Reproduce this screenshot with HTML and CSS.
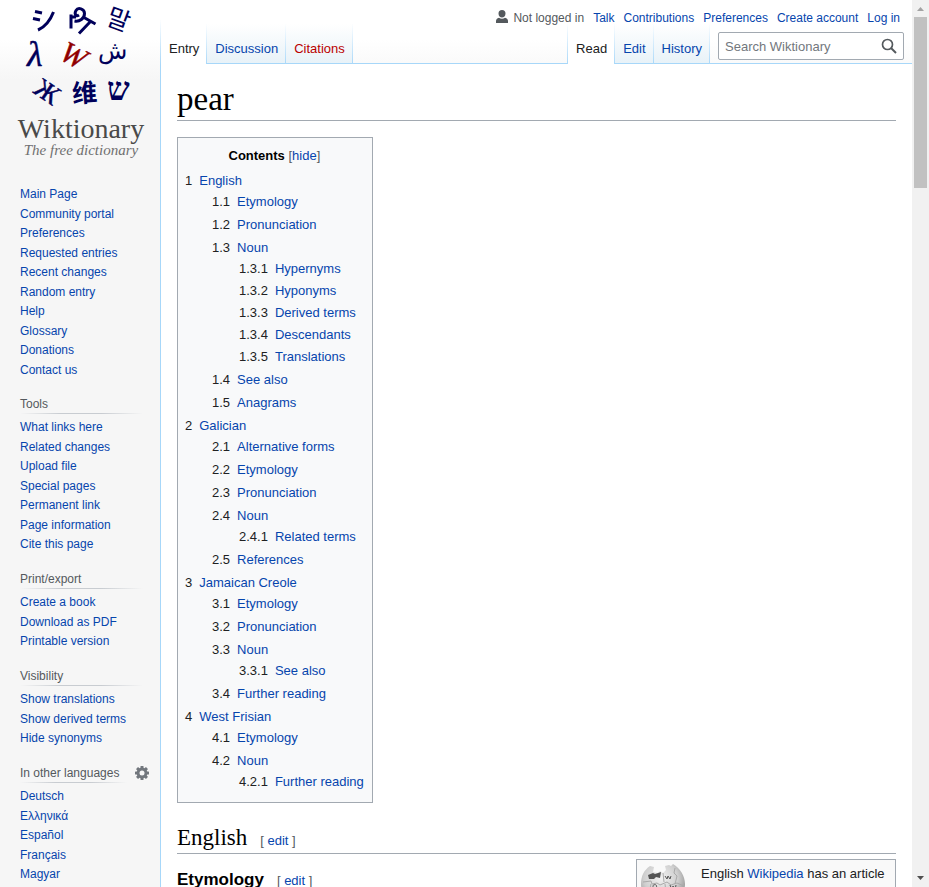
FILE: index.html
```html
<!DOCTYPE html>
<html lang="en">
<head>
<meta charset="utf-8">
<title>pear - Wiktionary</title>
<link rel="stylesheet" href="styles.css">
</head>
<body>
<div class="window">
  <aside class="sidebar">
    <a class="logo" href="#" aria-label="Wiktionary, the free dictionary">
      <svg width="160" height="160" viewBox="0 0 160 160" aria-hidden="true">
        <g class="glyphs">
          <g fill="none" stroke="#00005a">
            <path stroke-width="3" d="M35 11.500l7 1.500M33 18.500l7 1.500M38 30c7-3 12-9 15.500-18"/>
            <path stroke-width="3" d="M71 28.500V14.500M71 17h5M79 15c-3 2-5-1-3-4.500c2-3.500 8.500-2 8.500 3c0 5-5 8.500-10 7.500M79 33.500L90 22M84 17.500l11.500 6.500"/>
          </g>
          <text class="cjk" x="107" y="29" font-size="25" transform="rotate(20 120 20)">말</text>
          <text class="serif light italic" x="27" y="66" font-size="36">λ</text>
          <text class="serif light italic red" x="61" y="66" font-size="30" transform="rotate(28 75 56)">W</text>
          <text class="arabic" x="98" y="59" font-size="24">ش</text>
          <text class="serif light" x="35" y="101" font-size="27" transform="rotate(34 48 92)">Ж</text>
          <text class="cjk bold" x="72" y="102" font-size="25" transform="rotate(-4 84 92)">维</text>
          <text class="serif" x="107" y="100" font-size="32">ש</text>
        </g>
        <text class="wordmark" x="81" y="138" text-anchor="middle">Wiktionary</text>
        <text class="tagline" x="81" y="155" text-anchor="middle">The free dictionary</text>
      </svg>
    </a>
    <nav class="portal first" aria-label="Navigation">
      <ul>
        <li><a href="#">Main Page</a></li>
        <li><a href="#">Community portal</a></li>
        <li><a href="#">Preferences</a></li>
        <li><a href="#">Requested entries</a></li>
        <li><a href="#">Recent changes</a></li>
        <li><a href="#">Random entry</a></li>
        <li><a href="#">Help</a></li>
        <li><a href="#">Glossary</a></li>
        <li><a href="#">Donations</a></li>
        <li><a href="#">Contact us</a></li>
      </ul>
    </nav>
    <nav class="portal">
      <h3>Tools</h3>
      <ul>
        <li><a href="#">What links here</a></li>
        <li><a href="#">Related changes</a></li>
        <li><a href="#">Upload file</a></li>
        <li><a href="#">Special pages</a></li>
        <li><a href="#">Permanent link</a></li>
        <li><a href="#">Page information</a></li>
        <li><a href="#">Cite this page</a></li>
      </ul>
    </nav>
    <nav class="portal">
      <h3>Print/export</h3>
      <ul>
        <li><a href="#">Create a book</a></li>
        <li><a href="#">Download as PDF</a></li>
        <li><a href="#">Printable version</a></li>
      </ul>
    </nav>
    <nav class="portal">
      <h3>Visibility</h3>
      <ul>
        <li><a href="#">Show translations</a></li>
        <li><a href="#">Show derived terms</a></li>
        <li><a href="#">Hide synonyms</a></li>
      </ul>
    </nav>
    <nav class="portal languages">
      <div class="portal-head">
        <h3>In other languages</h3>
        <button class="settings" type="button" aria-label="Language settings">
          <svg width="14" height="14" viewBox="0 0 14 14" aria-hidden="true">
            <g fill="#72777d">
              <rect x="5.500" y="0" width="3" height="14" rx=".5"/>
              <rect x="5.500" y="0" width="3" height="14" rx=".5" transform="rotate(45 7 7)"/>
              <rect x="5.500" y="0" width="3" height="14" rx=".5" transform="rotate(90 7 7)"/>
              <rect x="5.500" y="0" width="3" height="14" rx=".5" transform="rotate(135 7 7)"/>
              <circle cx="7" cy="7" r="5.400"/>
            </g>
            <circle cx="7" cy="7" r="2.500" fill="#f6f6f6"/>
          </svg>
        </button>
      </div>
      <ul>
        <li><a href="#">Deutsch</a></li>
        <li><a href="#">Ελληνικά</a></li>
        <li><a href="#">Español</a></li>
        <li><a href="#">Français</a></li>
        <li><a href="#">Magyar</a></li>
      </ul>
    </nav>
  </aside>

  <div class="main">
    <header class="head">
      <ul class="personal">
        <li class="anon">
          <svg width="12" height="13" viewBox="0 0 12 13" aria-hidden="true"><path fill="#54595d" d="M6 0a3.500 3.500 0 0 1 3.500 3.500C9.500 6 7.900 7.400 6 7.400S2.500 6 2.500 3.500A3.500 3.500 0 0 1 6 0zM3 7.800c1.800 1.200 4.200 1.200 6 0c2 .5 3 1.700 3 3.200V13H0v-2c0-1.500 1-2.700 3-3.200z"/></svg>
          <span>Not logged in</span>
        </li>
        <li><a href="#">Talk</a></li>
        <li><a href="#">Contributions</a></li>
        <li><a href="#">Preferences</a></li>
        <li><a href="#">Create account</a></li>
        <li><a href="#">Log in</a></li>
      </ul>
      <div class="bar">
        <ul class="tabs">
          <li class="selected"><a href="#">Entry</a></li>
          <li><a href="#">Discussion</a></li>
          <li><a class="new" href="#">Citations</a></li>
        </ul>
        <ul class="tabs views">
          <li class="selected"><a href="#">Read</a></li>
          <li><a href="#">Edit</a></li>
          <li><a href="#">History</a></li>
        </ul>
        <form class="search">
          <input type="text" placeholder="Search Wiktionary" aria-label="Search Wiktionary">
          <button type="button" aria-label="Go">
            <svg width="16" height="16" viewBox="0 0 16 16" fill="none" stroke="#54595d" aria-hidden="true"><circle cx="6.500" cy="6.500" r="5" stroke-width="1.700"/><path stroke-width="2" d="M10 10l5 5"/></svg>
          </button>
        </form>
      </div>
    </header>

    <main class="content">
      <h1>pear</h1>
      <nav class="toc" aria-label="Contents">
        <div class="toc-title"><h2>Contents</h2> <span>[<a href="#">hide</a>]</span></div>
        <ul>
          <li><a href="#"><span>1</span>English</a>
            <ul>
              <li><a href="#"><span>1.1</span>Etymology</a></li>
              <li><a href="#"><span>1.2</span>Pronunciation</a></li>
              <li><a href="#"><span>1.3</span>Noun</a>
                <ul>
                  <li><a href="#"><span>1.3.1</span>Hypernyms</a></li>
                  <li><a href="#"><span>1.3.2</span>Hyponyms</a></li>
                  <li><a href="#"><span>1.3.3</span>Derived terms</a></li>
                  <li><a href="#"><span>1.3.4</span>Descendants</a></li>
                  <li><a href="#"><span>1.3.5</span>Translations</a></li>
                </ul>
              </li>
              <li><a href="#"><span>1.4</span>See also</a></li>
              <li><a href="#"><span>1.5</span>Anagrams</a></li>
            </ul>
          </li>
          <li><a href="#"><span>2</span>Galician</a>
            <ul>
              <li><a href="#"><span>2.1</span>Alternative forms</a></li>
              <li><a href="#"><span>2.2</span>Etymology</a></li>
              <li><a href="#"><span>2.3</span>Pronunciation</a></li>
              <li><a href="#"><span>2.4</span>Noun</a>
                <ul>
                  <li><a href="#"><span>2.4.1</span>Related terms</a></li>
                </ul>
              </li>
              <li><a href="#"><span>2.5</span>References</a></li>
            </ul>
          </li>
          <li><a href="#"><span>3</span>Jamaican Creole</a>
            <ul>
              <li><a href="#"><span>3.1</span>Etymology</a></li>
              <li><a href="#"><span>3.2</span>Pronunciation</a></li>
              <li><a href="#"><span>3.3</span>Noun</a>
                <ul>
                  <li><a href="#"><span>3.3.1</span>See also</a></li>
                </ul>
              </li>
              <li><a href="#"><span>3.4</span>Further reading</a></li>
            </ul>
          </li>
          <li><a href="#"><span>4</span>West Frisian</a>
            <ul>
              <li><a href="#"><span>4.1</span>Etymology</a></li>
              <li><a href="#"><span>4.2</span>Noun</a>
                <ul>
                  <li><a href="#"><span>4.2.1</span>Further reading</a></li>
                </ul>
              </li>
            </ul>
          </li>
        </ul>
      </nav>

      <div class="section-head major">
        <h2>English</h2>
        <span class="edit">[ <a href="#">edit</a> ]</span>
      </div>
      <div class="section-row">
        <div class="section-head">
          <h3>Etymology</h3>
          <span class="edit">[ <a href="#">edit</a> ]</span>
        </div>
        <aside class="sister">
          <svg width="44" height="40" viewBox="0 0 44 40" aria-hidden="true">
            <defs><radialGradient id="ball" cx=".45" cy=".35" r=".65"><stop offset="0" stop-color="#f2f2f2"/><stop offset=".6" stop-color="#cfcfcf"/><stop offset="1" stop-color="#8e8e8e"/></radialGradient></defs>
            <path fill="url(#ball)" d="M9 2l4 1l-1 5l5 1l2-2l3 2l3-3l-1-4l4-1l2 1l2-2C39 4 44 12 44 20a22 20 0 0 1-44 0C0 12 3 6 9 2z"/>
            <path fill="#555" d="M7 11l5-2l2 1l6-2l-1 6l-4-1l-2 2l-5 0z"/>
            <g fill="none" stroke="#aaa"><path d="M2 18l8-1l1 3l5-1l3 2l7-3l4 3l6-2l7 3M22 9l1 9M34 4l-1 5l3 3l-2 8M10 20l-2 9M24 20l1 8"/></g>
            <g fill="none" stroke="#555"><path d="M11 24h2c-4-4 5-5 2 0h2M24 12l2 3l1-3l2 3l1-3M29 21l2 5l1-4l2 4l1-5"/></g>
          </svg>
          <p>English <a href="#">Wikipedia</a> has an article on:</p>
        </aside>
      </div>
    </main>
  </div>

  <div class="scrollbar" aria-hidden="true">
    <svg width="17" height="17" viewBox="0 0 17 17"><path fill="#a3a3a3" d="M5 11l3.500-4L12 11z"/></svg>
    <div class="track"><div class="thumb"></div></div>
    <svg width="17" height="17" viewBox="0 0 17 17"><path fill="#505050" d="M5 6h7l-3.500 4z"/></svg>
  </div>
</div>
</body>
</html>
```
FILE: styles.css
```css
* { box-sizing: border-box; }

body {
  margin: 0;
  overflow: hidden;
  font-family: "Liberation Sans", Arial, sans-serif;
  font-size: 13px;
  color: #202122;
}

a { color: #0645ad; text-decoration: none; }
a:hover { text-decoration: underline; }
ul { list-style: none; margin: 0; padding: 0; }
h1, h2, h3, p { margin: 0; font-weight: normal; }
button { border: 0; padding: 0; background: none; cursor: pointer; }
svg { display: block; flex: none; }

.window {
  display: grid;
  grid-template-columns: 160px minmax(0, 1fr) 17px;
  grid-template-rows: minmax(0, 1fr);
  height: 100vh;
  overflow: hidden;
  background: #f6f6f6 linear-gradient(#fff 50%, #f6f6f6) 0 0 / 100% 80px no-repeat;
}

/* Sidebar */
.sidebar { min-width: 0; font-size: 12px; }
.logo { display: block; }
.glyphs text { fill: #00005a; }
.glyphs .red { fill: #900000; stroke: #900000; }
.cjk { font-family: "Noto Sans CJK SC", sans-serif; }
.serif { font-family: "Liberation Serif", serif; font-weight: bold; }
.light { font-weight: normal; stroke: #00005a; stroke-width: 0.5; }
.italic { font-style: italic; }
.bold { font-weight: bold; }
.arabic { font-family: "DejaVu Sans", sans-serif; }
.wordmark { font-family: "Liberation Serif", serif; font-size: 28px; fill: #4a4a4a; }
.tagline { font-family: "Liberation Serif", serif; font-size: 15px; font-style: italic; fill: #707070; }

.portal { padding: 0 17px 0 20px; margin-top: 14px; }
.portal.first { margin-top: 25px; }
.portal h3 {
  font-size: 12px;
  line-height: 20px;
  color: #54595d;
  background: linear-gradient(to right, rgba(200, 204, 209, 0), #c8ccd1 33%, #c8ccd1 66%, rgba(200, 204, 209, 0)) 0 100% / 100% 1px no-repeat;
}
.portal h3 + ul, .portal-head + ul { padding-top: 4px; }
.portal li { line-height: 19px; }
.portal li:nth-child(odd) { padding-bottom: 1px; }
.portal-head { display: flex; align-items: center; gap: 8px; margin-right: -6px; }
.portal-head h3 { flex: 1; }

/* Header */
.main { display: flex; flex-direction: column; min-width: 0; }
.head {
  display: flex;
  flex-direction: column;
  height: 64px;
  flex: none;
  border-left: 1px solid;
  border-image: linear-gradient(rgba(167, 215, 249, 0) 30%, #a7d7f9) 1;
  background: linear-gradient(#a7d7f9, #a7d7f9) 0 100% / 100% 1px no-repeat;
}
.personal {
  display: flex;
  justify-content: flex-end;
  gap: 9px;
  padding: 8px 12px 0 0;
  height: 24px;
  font-size: 12px;
  line-height: 20px;
  white-space: nowrap;
}
.anon { display: flex; gap: 5px; color: #54595d; }
.anon svg { margin-top: 2px; }

.bar { display: flex; height: 40px; }
.tabs { display: flex; }
.tabs.views { margin-left: auto; border-left: 1px solid; border-image: linear-gradient(#fff, #a7d7f9) 1; }
.tabs li {
  border-right: 1px solid;
  border-image: linear-gradient(#fff, #a7d7f9) 1;
  background: linear-gradient(#fff, #e8f2f8) 0 0 / 100% 39px no-repeat;
}
.tabs li.selected { background: #fff; }
.tabs a { display: block; padding: 15px 7px 0 8px; line-height: 20px; }
.tabs .selected a { color: #202122; }
.tabs .new { color: #ba0000; }

.search {
  display: flex;
  align-items: center;
  width: 186px;
  height: 28px;
  margin: 8px 8px 0;
  border: 1px solid #a2a9b1;
  border-radius: 2px;
  background: #fff;
}
.search input {
  flex: 1;
  min-width: 0;
  padding: 0 6px;
  border: 0;
  outline: 0;
  background: none;
  font: 13px "Liberation Sans", Arial, sans-serif;
}
.search input::placeholder { color: #72777d; opacity: 1; }
.search button { margin-right: 6px; }

/* Article */
.content {
  flex: 1;
  padding: 16px 16px 0;
  border-left: 1px solid #a7d7f9;
  background: #fff;
}
h1, .major h2 { font-family: "Liberation Serif", Georgia, serif; color: #000; }
h1 {
  padding-bottom: 1px;
  border-bottom: 1px solid #a2a9b1;
  font-size: 33px;
  line-height: 39px;
}

.toc {
  width: fit-content;
  margin-top: 16px;
  padding: 7px 8px 10px 7px;
  border: 1px solid #a2a9b1;
  background: #f8f9fa;
}
.toc-title { margin-bottom: 4px; text-align: center; line-height: 21px; }
.toc-title h2 { display: inline; font-size: 13px; font-weight: bold; color: #000; }
.toc-title span { color: #54595d; }
.toc li { line-height: 21px; }
.toc li + li { margin-top: 2px; }
.toc li a { display: flex; gap: 7px; }
.toc li span { color: #202122; }
.toc ul ul { padding-left: 27px; }
.toc ul ul ul li + li { margin-top: 1px; }

.section-head { display: flex; align-items: baseline; gap: 13px; }
.section-head.major { margin-top: 20px; padding-bottom: 1px; border-bottom: 1px solid #a2a9b1; }
.major h2 { font-size: 23px; line-height: 29px; }
.section-head h3 { font-size: 17px; font-weight: bold; line-height: 26px; color: #000; }
.edit { color: #54595d; }
.section-row { display: flex; justify-content: space-between; align-items: flex-start; padding-top: 5px; }
.section-row .section-head { padding-top: 8px; }
.sister {
  display: flex;
  gap: 16px;
  width: 260px;
  padding: 4px;
  border: 1px solid #a2a9b1;
  background: #f9f9f9;
}
.sister p { line-height: 20px; }

/* Scroll bar */
.scrollbar { display: flex; flex-direction: column; background: #f1f1f1; }
.track { flex: 1; padding: 0 2px; }
.thumb { height: 20%; background: #c1c1c1; }
```
